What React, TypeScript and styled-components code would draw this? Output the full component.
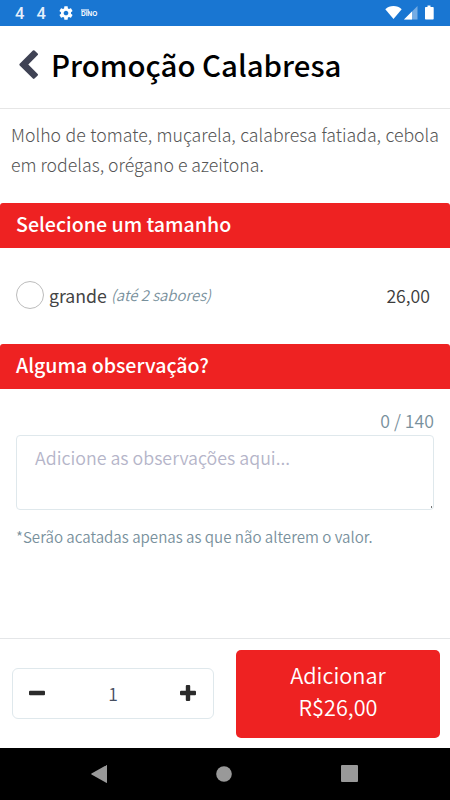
import { useState } from "react";
import styled, { createGlobalStyle } from "styled-components";

const MAX_LENGTH = 140;
const PRICE = 26;

const formatPrice = (value: number) => value.toFixed(2).replace(".", ",");

const App = () => {
  const [note, setNote] = useState("");
  const [size, setSize] = useState("");
  const [quantity, setQuantity] = useState(1);

  return (
    <>
      <GlobalStyle />
      <Screen>
        <StatusBar>
          <StatusGroup>
            <Badge>4</Badge>
            <Badge>4</Badge>
            <GearIcon viewBox="0 0 24 24">
              <path d="M19.43 12.98c.04-.32.07-.64.07-.98s-.03-.66-.07-.98l2.11-1.65c.19-.15.24-.42.12-.64l-2-3.46c-.12-.22-.39-.3-.61-.22l-2.49 1c-.52-.4-1.08-.73-1.69-.98l-.38-2.65C14.46 2.18 14.25 2 14 2h-4c-.25 0-.46.18-.49.42l-.38 2.65c-.61.25-1.17.59-1.69.98l-2.49-1c-.23-.09-.49 0-.61.22l-2 3.46c-.13.22-.07.49.12.64l2.11 1.65c-.04.32-.07.65-.07.98s.03.66.07.98l-2.11 1.65c-.19.15-.24.42-.12.64l2 3.46c.12.22.39.3.61.22l2.49-1c.52.4 1.08.73 1.69.98l.38 2.65c.03.24.24.42.49.42h4c.25 0 .46-.18.49-.42l.38-2.65c.61-.25 1.17-.59 1.69-.98l2.49 1c.23.09.49 0 .61-.22l2-3.46c.12-.22.07-.49-.12-.64l-2.11-1.65zM12 15.5c-1.93 0-3.5-1.57-3.5-3.5s1.57-3.5 3.5-3.5 3.5 1.57 3.5 3.5-1.57 3.5-3.5 3.5z" />
            </GearIcon>
            <DinoLogo>
              <DinoTop />
              DINO
            </DinoLogo>
          </StatusGroup>
          <SignalIcons viewBox="0 0 50 16">
            <path d="M0.3 4.2C2.6 2 5.3 1.1 8.5 1.1s5.9.9 8.2 3.1L8.5 14z" />
            <path d="M32.5 1v13.5H19z" opacity="0.4" />
            <path d="M27 6.5v8h-8z" />
            <path d="M42.5 0.5h3V2H48c.4 0 .7.3.7.7v11.1c0 .4-.3.7-.7.7h-7.3c-.4 0-.7-.3-.7-.7V2.7c0-.4.3-.7.7-.7h1.8z" />
          </SignalIcons>
        </StatusBar>

        <Header>
          <BackButton aria-label="Voltar">
            <svg width="20" height="30" viewBox="0 0 20 30">
              <path d="M13.9 0.6q.8-.8 1.6 0l3.2 3q.7.8 0 1.5L9.3 14.5l9.4 9.5q.7.8 0 1.5l-3.2 3.1q-.8.7-1.6 0L0.7 15.4q-.7-.8 0-1.6z" />
            </svg>
          </BackButton>
          <Title>Promoção Calabresa</Title>
        </Header>

        <Main>
          <Description>
            Molho de tomate, muçarela, calabresa fatiada, cebola em rodelas,
            orégano e azeitona.
          </Description>

          <SectionTitle>Selecione um tamanho</SectionTitle>
          <Option>
            <Radio
              type="radio"
              name="size"
              checked={size === "grande"}
              onChange={() => setSize("grande")}
            />
            <OptionName>grande</OptionName>
            <OptionHint>(até 2 sabores)</OptionHint>
            <OptionPrice>{formatPrice(PRICE)}</OptionPrice>
          </Option>

          <SectionTitle>Alguma observação?</SectionTitle>
          <NoteForm>
            <Counter>
              {note.length} / {MAX_LENGTH}
            </Counter>
            <NoteInput
              placeholder="Adicione as observações aqui..."
              maxLength={MAX_LENGTH}
              value={note}
              onChange={(e) => setNote(e.target.value)}
            />
            <NoteHelp>*Serão acatadas apenas as que não alterem o valor.</NoteHelp>
          </NoteForm>
        </Main>

        <Footer>
          <Stepper>
            <StepButton
              aria-label="Diminuir"
              onClick={() => setQuantity(Math.max(1, quantity - 1))}
            >
              <svg width="16" height="16" viewBox="0 0 16 16">
                <rect y="5.8" width="16" height="4.4" rx="1" />
              </svg>
            </StepButton>
            <Quantity>{quantity}</Quantity>
            <StepButton
              aria-label="Aumentar"
              onClick={() => setQuantity(quantity + 1)}
            >
              <svg width="16" height="16" viewBox="0 0 16 16">
                <rect y="5.8" width="16" height="4.4" rx="1" />
                <rect x="5.8" width="4.4" height="16" rx="1" />
              </svg>
            </StepButton>
          </Stepper>
          <AddButton>
            <span>Adicionar</span>
            <span>R${formatPrice(PRICE * quantity)}</span>
          </AddButton>
        </Footer>

        <NavBar>
          <svg width="16" height="20" viewBox="0 0 16 20">
            <path d="M16 1.6v16.8c0 .5-.4.6-.8.4L.5 10.5c-.5-.3-.5-.7 0-1L15.2 1.2c.4-.2.8-.1.8.4z" />
          </svg>
          <svg width="16" height="16" viewBox="0 0 16 16">
            <circle cx="8" cy="8" r="7.8" />
          </svg>
          <svg width="17" height="17" viewBox="0 0 17 17">
            <rect width="17" height="17" rx="1" />
          </svg>
        </NavBar>
      </Screen>
    </>
  );
};

const GlobalStyle = createGlobalStyle`
  *, *::before, *::after {
    box-sizing: border-box;
  }

  body {
    margin: 0;
    background-color: #fff;
  }

  body, button, textarea {
    font-family: "Noto Sans CJK SC", "Noto Sans", sans-serif;
  }
`;

const Screen = styled.div`
  width: 450px;
  height: 800px;
  display: flex;
  flex-direction: column;
  overflow: hidden;
  background-color: #fff;
`;

const StatusBar = styled.div`
  height: 26px;
  flex-shrink: 0;
  padding: 0 15px;
  display: flex;
  justify-content: space-between;
  align-items: center;
  background-color: #1976d2;
`;

const StatusGroup = styled.div`
  display: flex;
  align-items: center;
`;

const Badge = styled.span`
  width: 21.5px;
  padding-top: 2px;
  font-family: Roboto, sans-serif;
  font-size: 16.5px;
  font-weight: 500;
  line-height: 26px;
  color: #e4effb;
`;

const GearIcon = styled.svg`
  width: 16px;
  height: 16px;
  margin-right: 7px;
  fill: #fff;
`;

const DinoLogo = styled.span`
  display: flex;
  flex-direction: column;
  font-family: "Liberation Sans", sans-serif;
  font-size: 6.5px;
  font-weight: 700;
  line-height: 6px;
  color: #fff;
`;

const DinoTop = styled.span`
  width: 8px;
  height: 2px;
  background-color: #9cc5ef;
`;

const SignalIcons = styled.svg`
  width: 50px;
  height: 16px;
  fill: #fff;
`;

const Header = styled.header`
  height: 83px;
  flex-shrink: 0;
  padding: 0 19px;
  display: flex;
  align-items: center;
  border-bottom: 1px solid #e6e6e6;
`;

const BackButton = styled.button`
  width: 32px;
  height: 30px;
  padding: 0;
  margin-bottom: 5px;
  display: flex;
  border: none;
  background: none;
  fill: #3f4254;
`;

const Title = styled.h1`
  margin: 0 0 6px;
  font-size: 29.4px;
  line-height: 40px;
  font-weight: 500;
  color: #000;
  white-space: nowrap;
`;

const Main = styled.main`
  flex: 1;
  min-height: 0;
`;

const Description = styled.p`
  height: 94px;
  margin: 0;
  padding: 10px 11px 0;
  font-size: 17.7px;
  line-height: 30px;
  font-weight: 300;
  text-align: justify;
  color: #555;
`;

const SectionTitle = styled.h2`
  height: 45px;
  margin: 0;
  padding: 0 16px;
  font-size: 19.6px;
  line-height: 42px;
  font-weight: 500;
  color: #fff;
  background-color: #ee2222;
  border-radius: 3px 3px 0 0;
`;

const Option = styled.label`
  height: 96px;
  padding: 0 20px 2px 16px;
  display: flex;
  align-items: center;
`;

const Radio = styled.input`
  appearance: none;
  width: 28px;
  height: 28px;
  margin: 0 5px 0 0;
  border: 1px solid #bcbcbc;
  border-radius: 50%;

  &:checked {
    border: 8px solid #ee2222;
  }
`;

const OptionName = styled.span`
  font-size: 17.7px;
  line-height: 28px;
  color: #444;
`;

const OptionHint = styled.em`
  margin-left: 4px;
  font-size: 14.9px;
  line-height: 28px;
  font-weight: 350;
  color: #78909c;
`;

const OptionPrice = styled.span`
  margin-left: auto;
  font-size: 17.7px;
  line-height: 28px;
  font-weight: 350;
  color: #3c3c3c;
`;

const NoteForm = styled.div`
  padding: 17px 16px 0;
  display: flex;
  flex-direction: column;
`;

const Counter = styled.span`
  height: 29px;
  font-size: 17.7px;
  line-height: 28px;
  font-weight: 350;
  text-align: right;
  color: #78909c;
`;

const NoteInput = styled.textarea`
  height: 75px;
  padding: 7px 18px;
  font-size: 17.8px;
  line-height: 28px;
  font-weight: 350;
  color: #3f4254;
  background: linear-gradient(#777, #777) right 1px bottom 1px / 1px 2px no-repeat #fff;
  border: 1px solid #dfe8ec;
  border-radius: 4px;
  outline: none;
  resize: none;

  &::placeholder {
    color: #b5b5c9;
  }
`;

const NoteHelp = styled.span`
  margin-top: 14px;
  font-size: 15.1px;
  line-height: 24px;
  font-weight: 350;
  color: #78909c;
`;

const Footer = styled.footer`
  height: 110px;
  flex-shrink: 0;
  padding: 0 10px 0 12px;
  display: flex;
  justify-content: space-between;
  align-items: center;
  border-top: 1px solid #e4e6e8;
`;

const Stepper = styled.div`
  width: 202px;
  height: 51px;
  display: flex;
  align-items: center;
  border: 1px solid #dfe8ec;
  border-radius: 6px;
`;

const StepButton = styled.button`
  width: 49px;
  height: 49px;
  padding: 0 1px 1px 0;
  display: flex;
  justify-content: center;
  align-items: center;
  border: none;
  background: none;
  fill: #2b2b2b;
`;

const Quantity = styled.span`
  flex: 1;
  font-size: 17.5px;
  line-height: 28px;
  font-weight: 350;
  text-align: center;
  color: #464e5f;
`;

const AddButton = styled.button`
  width: 204px;
  height: 88px;
  padding: 0 0 5px;
  display: flex;
  flex-direction: column;
  justify-content: center;
  align-items: center;
  font-size: 21.7px;
  line-height: 32px;
  font-weight: 350;
  color: #fff;
  background-color: #ee2222;
  border: none;
  border-radius: 5px;
`;

const NavBar = styled.nav`
  height: 52px;
  flex-shrink: 0;
  padding: 0 92px 1px 91px;
  display: flex;
  justify-content: space-between;
  align-items: center;
  background-color: #000;
  fill: #999;
`;

export default App;
